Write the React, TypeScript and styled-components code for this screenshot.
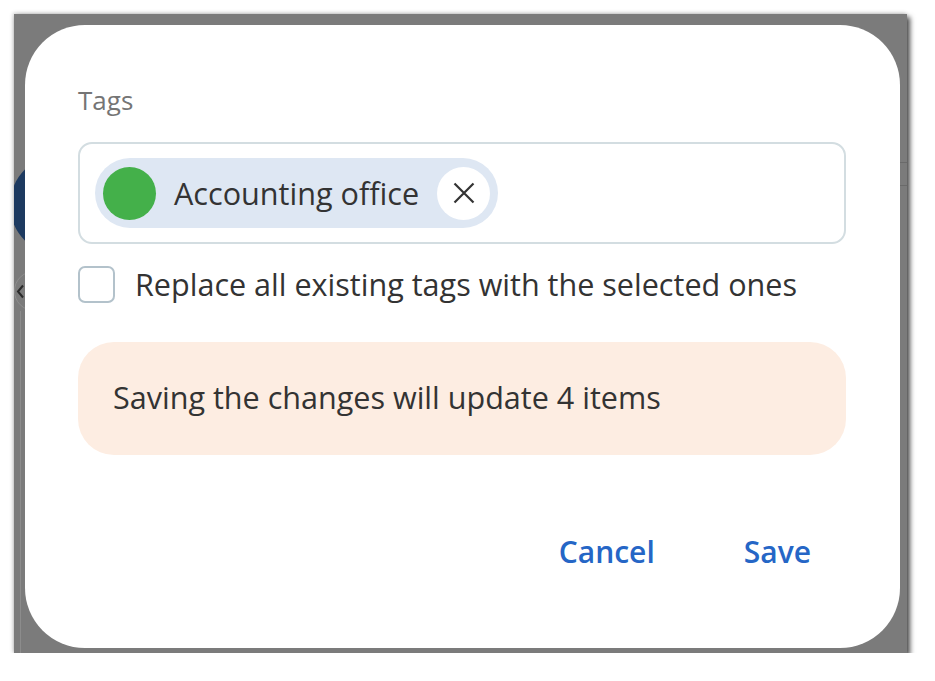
import React from "react";
import styled, { createGlobalStyle } from "styled-components";

const GlobalStyle = createGlobalStyle`
  html, body {
    margin: 0;
    padding: 0;
    background: #ffffff;
  }
  body {
    font-family: "Open Sans", "Noto Sans", sans-serif;
  }
  * { box-sizing: border-box; }
`;

const Frame = styled.div`
  position: relative;
  overflow: hidden;
  width: 893px;
  height: 639px;
  margin: 14px 0 0 14px;
  background: #7b7b7b;
  box-shadow: 3px 3px 5px rgba(0, 0, 0, 0.7), -1px -1px 4px rgba(0, 0, 0, 0.2);
`;

const BehindPage = styled.div`
  display: flex;
  height: 100%;
`;

const LeftColumn = styled.div`
  width: 40px;
  display: flex;
  flex-direction: column;
  align-items: flex-start;
`;

const Avatar = styled.div`
  width: 100px;
  height: 100px;
  border-radius: 50%;
  background: #1d3a60;
  margin: 141px 0 0 -4px;
  flex-shrink: 0;
`;

const BackButton = styled.div`
  width: 40px;
  height: 40px;
  border-radius: 50%;
  border: 1.5px solid #8e8e8e;
  margin: 16px 0 0 0;
  display: flex;
  align-items: center;
  padding-left: 1px;
  flex-shrink: 0;
  color: #2a2a2a;
`;

const SideLine = styled.div`
  width: 1px;
  flex: 1;
  margin-left: 6px;
  background: #8c8c8c;
`;

const MainArea = styled.div`
  flex: 1;
  display: flex;
  flex-direction: column;
`;

const BehindHeader = styled.div`
  height: 149px;
  border-bottom: 1px solid #6a6a6a;
`;

const BehindRow = styled.div`
  height: 23px;
  border-bottom: 1px solid #6a6a6a;
`;

const Overlay = styled.div`
  position: absolute;
  inset: 0;
  padding: 11px 7px 5px 11px;
  display: flex;
`;

const Dialog = styled.div`
  flex: 1;
  background: #ffffff;
  border-radius: 60px;
  padding: 57px 54px 0 53px;
  display: flex;
  flex-direction: column;
`;

const FieldLabel = styled.div`
  font-size: 26px;
  line-height: 36px;
  color: #757575;
`;

const TagInput = styled.div`
  margin-top: 24px;
  height: 102px;
  border: 2px solid #d3dde1;
  border-radius: 14px;
  padding: 14px 15px;
  display: flex;
  align-items: center;
`;

const Chip = styled.div`
  height: 70px;
  border-radius: 35px;
  background: #dee7f3;
  display: flex;
  align-items: center;
  padding: 0 8px;
  gap: 18px;
`;

const ColorDot = styled.span<{ $color: string }>`
  width: 53px;
  height: 53px;
  border-radius: 50%;
  background: ${(p) => p.$color};
  flex-shrink: 0;
`;

const ChipText = styled.span`
  font-size: 30.6px;
  line-height: 41px;
  color: #333333;
  white-space: nowrap;
`;

const RemoveButton = styled.button`
  width: 53px;
  height: 53px;
  border-radius: 50%;
  background: #ffffff;
  border: none;
  padding: 0;
  display: flex;
  align-items: center;
  justify-content: center;
  cursor: pointer;
  flex-shrink: 0;
`;

const CheckRow = styled.label`
  margin-top: 20px;
  display: flex;
  align-items: center;
  gap: 20px;
  cursor: pointer;
`;

const CheckBox = styled.span`
  width: 37px;
  height: 37px;
  border: 2px solid #b3c2cb;
  border-radius: 7px;
  flex-shrink: 0;
  background: #ffffff;
`;

const CheckLabel = styled.span`
  font-size: 30.55px;
  line-height: 41px;
  color: #333333;
  white-space: nowrap;
`;

const Notice = styled.div`
  margin-top: 37px;
  background: #fdede2;
  border-radius: 36px;
  padding: 35px 35px 37px;
  font-size: 30.55px;
  line-height: 41px;
  color: #333333;
`;

const Footer = styled.div`
  margin-top: 66px;
  display: flex;
  justify-content: flex-end;
  gap: 19px;
`;

const TextButton = styled.button`
  font-family: "Open Sans", "Noto Sans", sans-serif;
  font-size: 30px;
  line-height: 41px;
  font-weight: 600;
  color: #2566c6;
  background: transparent;
  border: none;
  padding: 10px 35px;
  cursor: pointer;
`;

function CloseIcon() {
  return (
    <svg width="22" height="22" viewBox="0 0 22 22" aria-hidden="true">
      <path d="M1.5 1.5 L20.5 20.5 M20.5 1.5 L1.5 20.5" stroke="#333333" strokeWidth="2.2" fill="none" />
    </svg>
  );
}

function ChevronLeft() {
  return (
    <svg width="9" height="15" viewBox="0 0 9 15" aria-hidden="true">
      <path d="M7 1.5 L2 7.5 L7 13.5" stroke="#2a2a2a" strokeWidth="2" fill="none" />
    </svg>
  );
}

export default function App() {
  return (
    <>
      <GlobalStyle />
      <Frame>
        <BehindPage>
          <LeftColumn>
            <Avatar />
            <BackButton>
              <ChevronLeft />
            </BackButton>
            <SideLine />
          </LeftColumn>
          <MainArea>
            <BehindHeader />
            <BehindRow />
          </MainArea>
        </BehindPage>
        <Overlay>
          <Dialog>
            <FieldLabel>Tags</FieldLabel>
            <TagInput>
              <Chip>
                <ColorDot $color="#44b04a" />
                <ChipText>Accounting office</ChipText>
                <RemoveButton aria-label="Remove tag">
                  <CloseIcon />
                </RemoveButton>
              </Chip>
            </TagInput>
            <CheckRow>
              <CheckBox />
              <CheckLabel>Replace all existing tags with the selected ones</CheckLabel>
            </CheckRow>
            <Notice>Saving the changes will update 4 items</Notice>
            <Footer>
              <TextButton>Cancel</TextButton>
              <TextButton>Save</TextButton>
            </Footer>
          </Dialog>
        </Overlay>
      </Frame>
    </>
  );
}
